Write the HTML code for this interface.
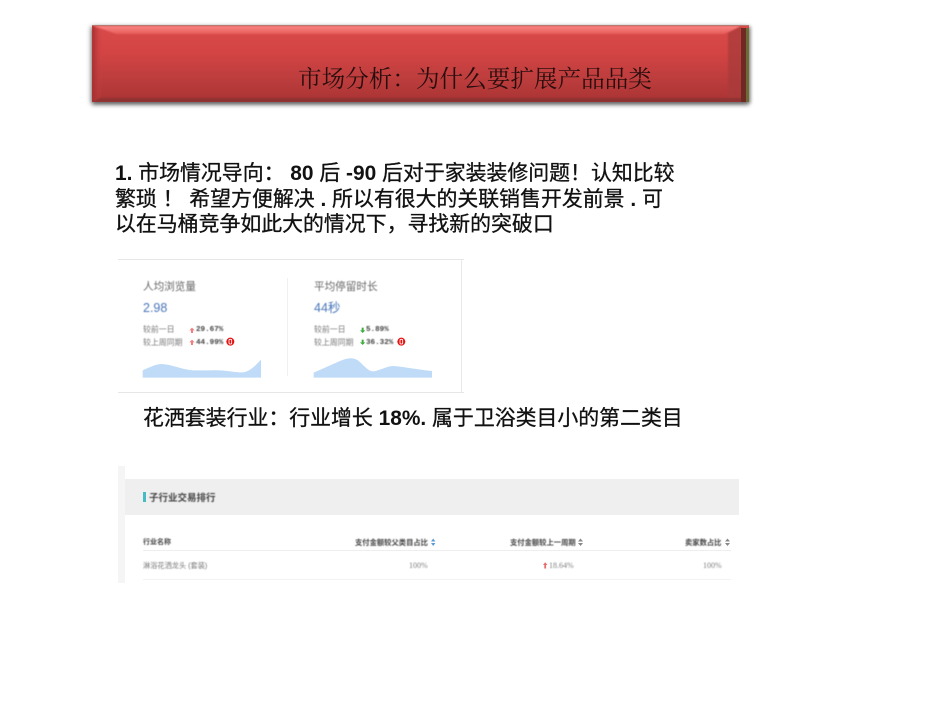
<!DOCTYPE html>
<html lang="zh">
<head>
<meta charset="utf-8">
<style>
html,body{margin:0;padding:0;background:#fff;}
#p{position:relative;width:950px;height:713px;overflow:hidden;background:#fff;font-family:"Liberation Sans","Noto Sans CJK SC",sans-serif;}
#p div{position:absolute;white-space:nowrap;}
.b{font-size:20.9px;line-height:26px;color:#111;-webkit-text-stroke:0.3px #111;}
.b b{-webkit-text-stroke:0;font-weight:bold;}
.sh{filter:blur(0.4px);}
.g{color:#666;font-size:10.6px;line-height:14px;}
.s{color:#777;font-size:7.9px;line-height:10px;}
.m{font-family:"Liberation Mono","Noto Sans CJK SC",monospace;font-weight:bold;font-size:7.6px;line-height:10px;color:#444;}
.h{color:#444;font-size:7.3px;line-height:10px;font-weight:bold;}
.v{color:#808080;font-size:8px;line-height:10px;font-family:"Liberation Serif",serif;}
</style>
</head>
<body>
<div id="p">
  <!-- banner -->
  <div style="left:92px;top:25px;width:657px;height:77px;background:linear-gradient(180deg,#d84a4a 0%,#d44444 35%,#c03e3e 65%,#aa3434 100%);box-shadow:0 3px 4px rgba(60,60,60,.6),-2px 1px 4px rgba(90,90,90,.35),2px 1px 3px rgba(90,90,90,.4);"></div>
  <svg style="position:absolute;left:92px;top:25px" width="657" height="77" viewBox="0 0 657 77">
    <defs>
      <filter id="bl" x="-2%" y="-20%" width="104%" height="140%"><feGaussianBlur stdDeviation="0.700"/></filter>
      <linearGradient id="lf" x1="0" x2="1" y1="0" y2="0"><stop offset="0" stop-color="#a02e2e"/><stop offset="1" stop-color="#cc4242" stop-opacity="0"/></linearGradient>
      <linearGradient id="tp" x1="0" x2="0" y1="0" y2="1"><stop offset="0" stop-color="#f88482"/><stop offset="1" stop-color="#e65c5a"/></linearGradient>
    </defs>
    <g filter="url(#bl)">
      <polygon points="0,0 10,6 10,72 0,77" fill="url(#lf)"/>
      <polygon points="2,1 649,1 632,9 24,9" fill="url(#tp)"/>
      <polygon points="649,1 636,8 636,72 649,77" fill="#a83838" opacity=".75"/>
      <polygon points="0,77 8,73 648,73 657,77" fill="#8e3030"/>
    </g>
    <rect x="649" y="3" width="5" height="74" fill="#6e2a22"/>
    <rect x="654" y="3" width="3" height="74" fill="#6e6a3a"/>
    <rect x="0" y="0" width="657" height="1" fill="#b87a70"/>
  </svg>
  <div style="left:298px;top:65px;font-family:'Liberation Serif','Noto Serif CJK SC',serif;font-size:23.6px;line-height:30px;color:#2a0e0e;filter:blur(0.3px);">市场分析：为什么要扩展产品品类</div>

  <!-- body text -->
  <div class="b" style="left:115px;top:160.500px;"><b>1.</b> 市场情况导向： <b>80</b> 后 <b>-90</b> 后对于家装装修问题！认知比较</div>
  <div class="b" style="left:115px;top:186.500px;">繁琐 ！ 希望方便解决 <b>.</b> 所以有很大的关联销售开发前景 <b>.</b> 可</div>
  <div class="b" style="left:115px;top:212px;">以在马桶竞争如此大的情况下，寻找新的突破口</div>

  <!-- stats screenshot -->
  <div style="left:118px;top:259px;width:346px;height:1px;background:#e6e6e6;"></div>
  <div style="left:118px;top:392px;width:346px;height:1px;background:#e6e6e6;"></div>
  <div style="left:461px;top:259px;width:1px;height:134px;background:#e9e9e9;"></div>
  <div style="left:287px;top:278px;width:1px;height:98px;background:#f0f0f0;"></div>
  <svg style="position:absolute;left:110px;top:255px" width="360" height="145" viewBox="0 0 1080 435">
    <path d="M98 346C125 334 140 327 155 327C185 328 215 344 250 346C280 347 310 345 330 346C355 347 380 353 400 352C420 350 440 328 453 314V368H98Z" fill="#bfdbf8"/>
    <path d="M611 353L690 318C712 308 730 306 745 317C765 335 775 349 790 349C810 347 830 333 850 333C880 335 930 345 966 348V368H611Z" fill="#bfdbf8"/>
    <path d="M238 226l8-8 8 8h-5v8h-6v-8z" fill="#f08080"/>
    <path d="M238 262l8-8 8 8h-5v8h-6v-8z" fill="#f08080"/>
    <path d="M750 226l8 8 8-8h-5v-8h-6v8z" fill="#3fae3f"/>
    <path d="M750 262l8 8 8-8h-5v-8h-6v8z" fill="#3fae3f"/>
    <circle cx="361" cy="260" r="12" fill="#e51212"/>
    <circle cx="874" cy="260" r="12" fill="#e51212"/>
    <rect x="357" y="253" width="8" height="14" rx="3" fill="none" stroke="#fff" stroke-width="2.500"/>
    <rect x="870" y="253" width="8" height="14" rx="3" fill="none" stroke="#fff" stroke-width="2.500"/>
  </svg>
  <div class="sh" style="left:0;top:0;width:950px;height:400px;">
    <div class="g" style="left:143px;top:280px;">人均浏览量</div>
    <div class="g" style="left:314px;top:280px;">平均停留时长</div>
    <div style="left:143px;top:300px;font-size:12.5px;line-height:16px;color:#4a76b8;">2.98</div>
    <div style="left:314px;top:300px;font-size:12.5px;line-height:16px;color:#4a76b8;">44秒</div>
    <div class="s" style="left:143px;top:325px;">较前一日</div>
    <div class="s" style="left:143px;top:337.500px;">较上周同期</div>
    <div class="s" style="left:314px;top:325px;">较前一日</div>
    <div class="s" style="left:314px;top:337.500px;">较上周同期</div>
    <div class="m" style="left:196px;top:325px;">29.67%</div>
    <div class="m" style="left:196px;top:337.500px;">44.99%</div>
    <div class="m" style="left:366px;top:325px;">5.89%</div>
    <div class="m" style="left:366px;top:337.500px;">36.32%</div>
  </div>

  <div class="b" style="left:143px;top:406px;">花洒套装行业：行业增长 <b>18%.</b> 属于卫浴类目小的第二类目</div>

  <!-- table screenshot -->
  <div style="left:118px;top:466px;width:7px;height:117px;background:#f5f5f5;"></div>
  <div style="left:125px;top:479px;width:614px;height:36px;background:#efefef;"></div>
  <div style="left:143px;top:492px;width:3px;height:10px;background:#45bcc4;"></div>
  <div style="left:143px;top:550px;width:588px;height:1px;background:#eee;"></div>
  <div style="left:143px;top:579px;width:588px;height:1px;background:#f3f3f3;"></div>
  <svg style="position:absolute;left:0;top:530px" width="950" height="50" viewBox="0 0 950 50">
    <path d="M431 11.500l2.200-3 2.200 3zM431 13l2.200 3 2.200-3z" fill="#5b9bd5"/>
    <path d="M578 11.500l2.500-3 2.500 3zM578 13l2.500 3 2.500-3z" fill="#888"/>
    <path d="M725 11.500l2.500-3 2.500 3zM725 13l2.500 3 2.500-3z" fill="#888"/>
    <path d="M543 35l2.200-2.800 2.200 2.800h-1.300v3.500h-1.800v-3.500z" fill="#e86a6a"/>
  </svg>
  <div class="sh" style="left:0;top:0;width:950px;height:600px;">
    <div style="left:149px;top:492px;font-size:9.5px;line-height:14px;color:#444;font-weight:bold;">子行业交易排行</div>
    <div class="h" style="left:143px;top:538px;font-size:7px;">行业名称</div>
    <div class="h" style="left:355px;top:538px;">支付金额较父类目占比</div>
    <div class="h" style="left:510px;top:538px;">支付金额较上一周期</div>
    <div class="h" style="left:685px;top:538px;">卖家数占比</div>
    <div class="v" style="left:143px;top:561px;font-family:'Liberation Sans','Noto Sans CJK SC',sans-serif;font-size:7.2px;color:#777;">淋浴花洒龙头 (套装)</div>
    <div class="v" style="left:409px;top:561px;">100%</div>
    <div class="v" style="left:549px;top:561px;">18.64%</div>
    <div class="v" style="left:703px;top:561px;">100%</div>
  </div>
</div>
</body>
</html>
